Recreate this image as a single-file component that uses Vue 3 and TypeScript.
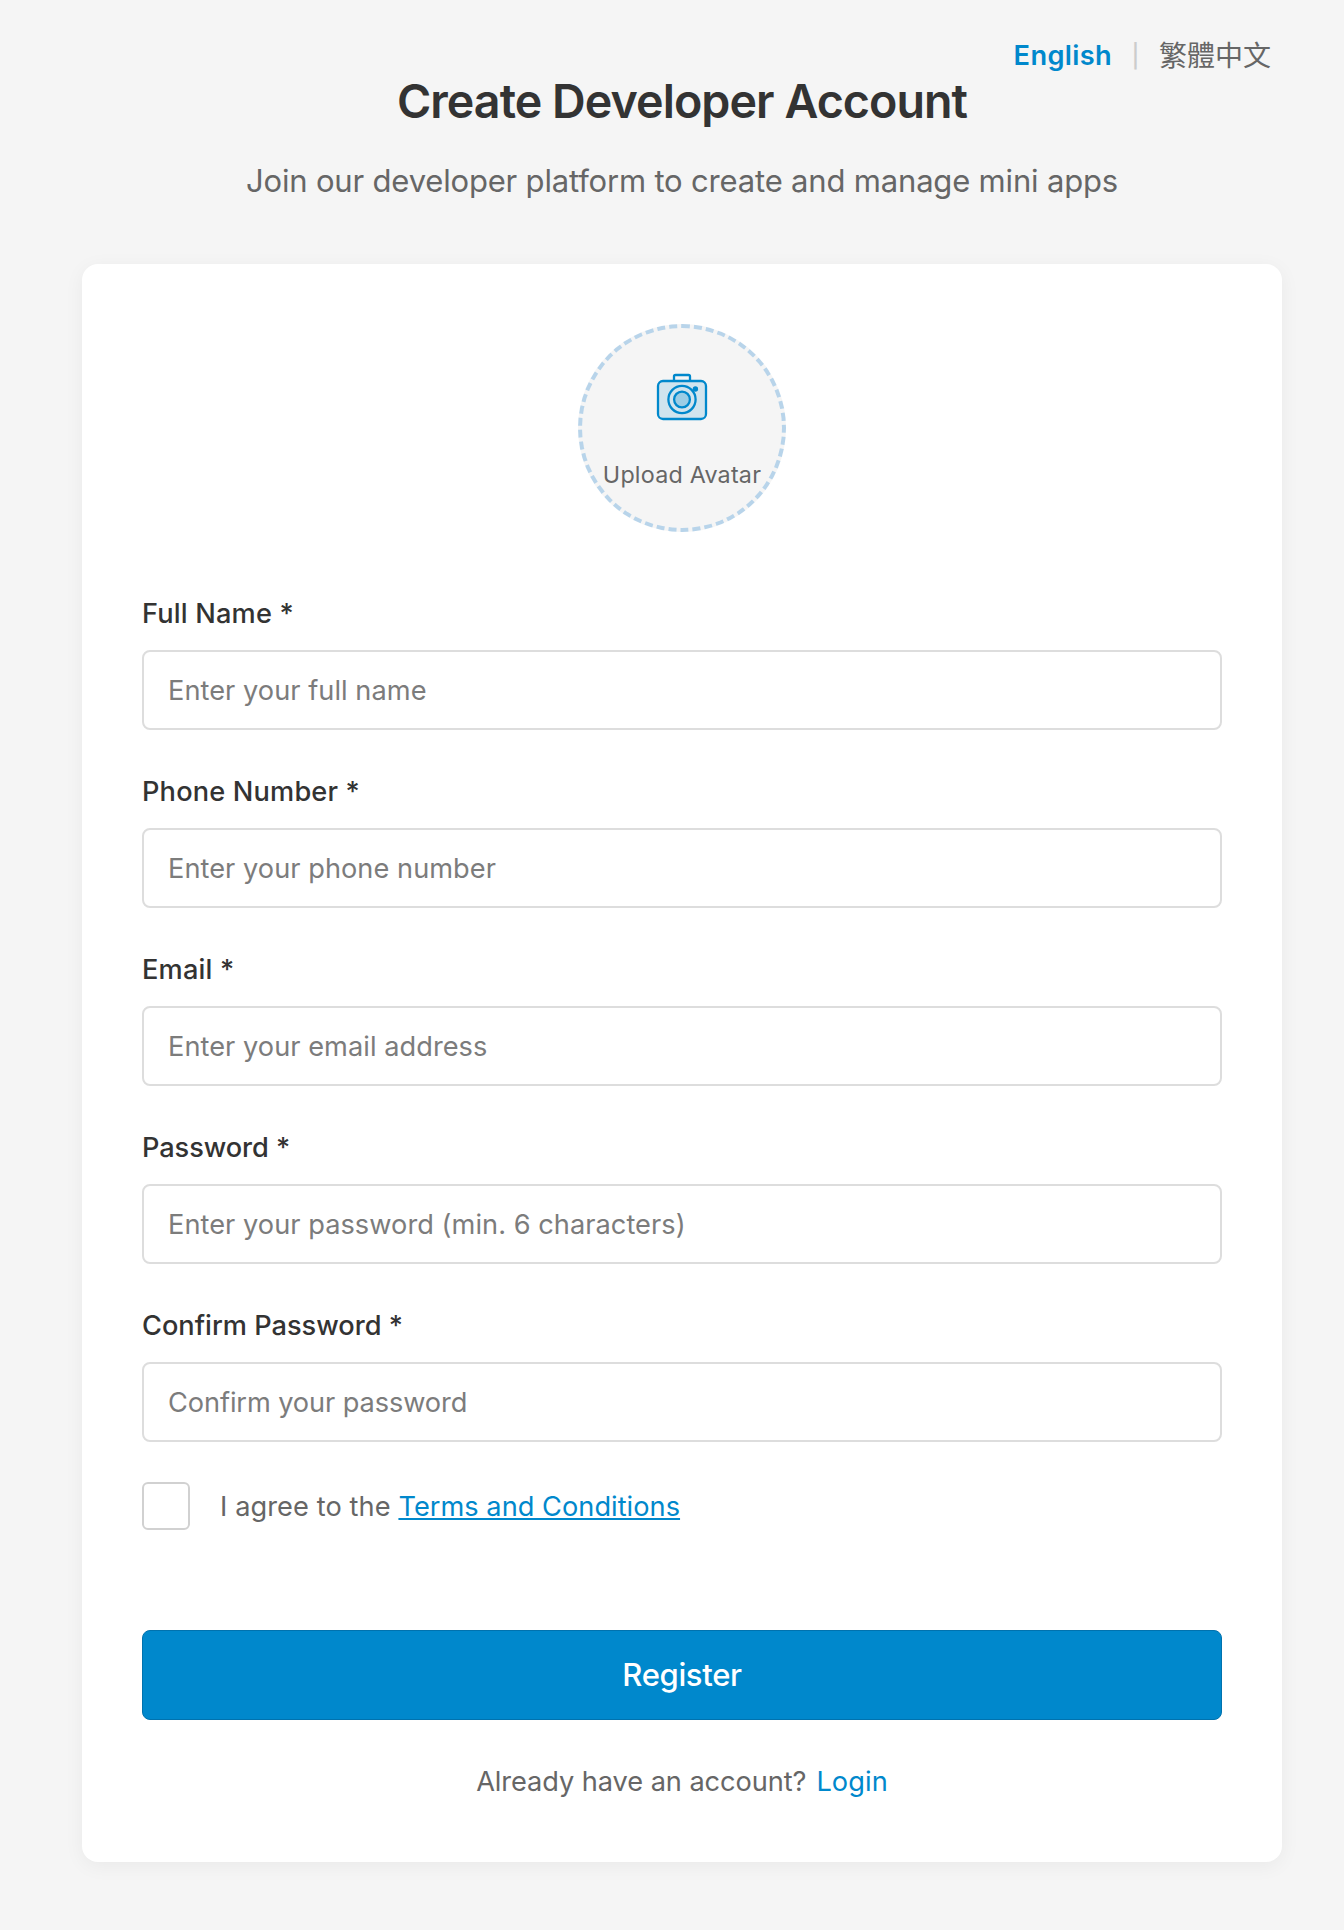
<script setup lang="ts">
import { reactive, ref } from 'vue'

type FieldKey = 'name' | 'phone' | 'email' | 'password' | 'confirm'

interface Field {
  key: FieldKey
  label: string
  placeholder: string
  type: string
}

const fields: Field[] = [
  { key: 'name', label: 'Full Name *', placeholder: 'Enter your full name', type: 'text' },
  { key: 'phone', label: 'Phone Number *', placeholder: 'Enter your phone number', type: 'tel' },
  { key: 'email', label: 'Email *', placeholder: 'Enter your email address', type: 'email' },
  { key: 'password', label: 'Password *', placeholder: 'Enter your password (min. 6 characters)', type: 'password' },
  { key: 'confirm', label: 'Confirm Password *', placeholder: 'Confirm your password', type: 'password' },
]

const form = reactive<Record<FieldKey, string>>({
  name: '',
  phone: '',
  email: '',
  password: '',
  confirm: '',
})
const agreed = ref(false)
const lang = ref<'en' | 'zh'>('en')
</script>

<template>
  <div class="page">
    <nav class="lang">
      <span class="lang-item en" :class="{ active: lang === 'en' }" @click="lang = 'en'">English</span>
      <span class="lang-sep">|</span>
      <span class="lang-item" :class="{ active: lang === 'zh' }" @click="lang = 'zh'">繁體中文</span>
    </nav>

    <header class="header">
      <h1 class="title">Create Developer Account</h1>
      <p class="subtitle">Join our developer platform to create and manage mini apps</p>
    </header>

    <form class="card" @submit.prevent>
      <div class="avatar">
        <svg class="camera" viewBox="0 0 60 60" fill="none" stroke="#0088cc" stroke-width="2.3">
          <rect x="6" y="11" width="48" height="38" rx="5" fill="#0088cc" fill-opacity="0.15" />
          <path d="M22 11V6.5a1.5 1.5 0 0 1 1.5-1.5h13a1.5 1.5 0 0 1 1.5 1.5V11" />
          <circle cx="30" cy="29.5" r="13.6" />
          <circle cx="30" cy="29.5" r="7.9" fill="#0088cc" fill-opacity="0.25" />
          <circle cx="43.4" cy="19" r="2.7" fill="#0088cc" stroke="none" />
        </svg>
        <span class="avatar-text">Upload Avatar</span>
      </div>

      <div v-for="f in fields" :key="f.key" class="field">
        <label class="label" :class="f.key" :for="f.key">{{ f.label }}</label>
        <input :id="f.key" v-model="form[f.key]" class="input" :class="f.key" :type="f.type" :placeholder="f.placeholder" />
      </div>

      <label class="agree">
        <input v-model="agreed" class="checkbox" type="checkbox" />
        <span class="agree-text">I agree to the <a class="terms">Terms and Conditions</a></span>
      </label>

      <button class="submit" type="submit">Register</button>

      <p class="footer"><span>Already have an account?</span><a class="login">Login</a></p>
    </form>
  </div>
</template>

<style>
body {
  background: #f5f5f5;
}
</style>

<style scoped>
.page {
  position: relative;
  box-sizing: border-box;
  min-height: 1930px;
  padding: 72px 62px 68px 82px;
  background: #f5f5f5;
  color: #666;
  font-family: Inter, 'Noto Sans CJK TC', sans-serif;
  font-size: 27.2px;
  line-height: 36px;
}
.lang {
  position: absolute;
  top: 38px;
  right: 73px;
  display: flex;
  align-items: center;
}
.lang-item {
  font-size: 28px;
  color: #666;
  cursor: pointer;
}
.lang-item.en {
  font-size: 27.2px;
  letter-spacing: 0.35px;
}
.lang-item.active {
  color: #0088cc;
  font-weight: 600;
}
.lang-sep {
  width: 47px;
  text-align: center;
  font-size: 23px;
  font-weight: 500;
  color: #ccc;
}
.header {
  text-align: center;
}
.title {
  margin: 0 0 32px;
  color: #333;
  font-size: 46.6px;
  font-weight: 600;
  line-height: 58px;
  letter-spacing: -0.95px;
}
.subtitle {
  margin: 0 0 64px;
  font-size: 31px;
  line-height: 38px;
  letter-spacing: -0.18px;
}
.card {
  display: flex;
  flex-direction: column;
  box-sizing: border-box;
  width: 1200px;
  padding: 60px 60px 62px;
  border-radius: 16px;
  background: #fff;
  box-shadow: 0 4px 20px rgba(0, 0, 0, 0.05);
}
.avatar {
  display: flex;
  flex-direction: column;
  align-items: center;
  align-self: center;
  box-sizing: border-box;
  width: 208px;
  height: 208px;
  margin-bottom: 64px;
  padding-top: 42px;
  border: 4px dashed #b8d4ea;
  border-radius: 50%;
  background: #f5f5f5;
}
.camera {
  width: 60px;
  height: 60px;
  margin-bottom: 30px;
}
.avatar-text {
  font-size: 23.3px;
  line-height: 30px;
  letter-spacing: 0.22px;
  white-space: nowrap;
}
.field {
  display: flex;
  flex-direction: column;
  gap: 18px;
  margin-bottom: 44px;
}
.label {
  color: #333;
  font-weight: 500;
  letter-spacing: 0.17px;
}
.label.password {
  letter-spacing: -0.08px;
}
.label.confirm {
  letter-spacing: 0;
}
.input {
  box-sizing: border-box;
  width: 100%;
  height: 80px;
  padding: 0 24px;
  border: 2px solid #ddd;
  border-radius: 8px;
  outline: none;
  background: #fff;
  color: #333;
  font: inherit;
  letter-spacing: 0.04px;
}
.input.confirm {
  letter-spacing: -0.1px;
}
.input::placeholder {
  color: #7c7c7c;
  opacity: 1;
}
.agree {
  display: flex;
  align-items: center;
  gap: 30px;
  margin: -4px 0 100px;
  letter-spacing: 0.09px;
}
.agree-text {
  padding-top: 2px;
}
.checkbox {
  appearance: none;
  box-sizing: border-box;
  width: 48px;
  height: 48px;
  margin: 0;
  border: 2px solid #d1d1d1;
  border-radius: 6px;
  background: #fff;
}
.terms {
  color: #0088cc;
  letter-spacing: 0.03px;
  text-decoration: underline;
  text-decoration-thickness: 2px;
  text-underline-offset: 2px;
}
.submit {
  height: 90px;
  padding: 0 0 2px;
  border: 1px solid #0072ae;
  border-radius: 8px;
  background: #0088cc;
  color: #fff;
  font-family: inherit;
  font-size: 31px;
  font-weight: 500;
  letter-spacing: -0.33px;
}
.footer {
  display: flex;
  justify-content: center;
  gap: 10px;
  margin: 44px 0 0;
  letter-spacing: -0.07px;
}
.login {
  color: #0088cc;
  letter-spacing: 0.09px;
}
</style>
